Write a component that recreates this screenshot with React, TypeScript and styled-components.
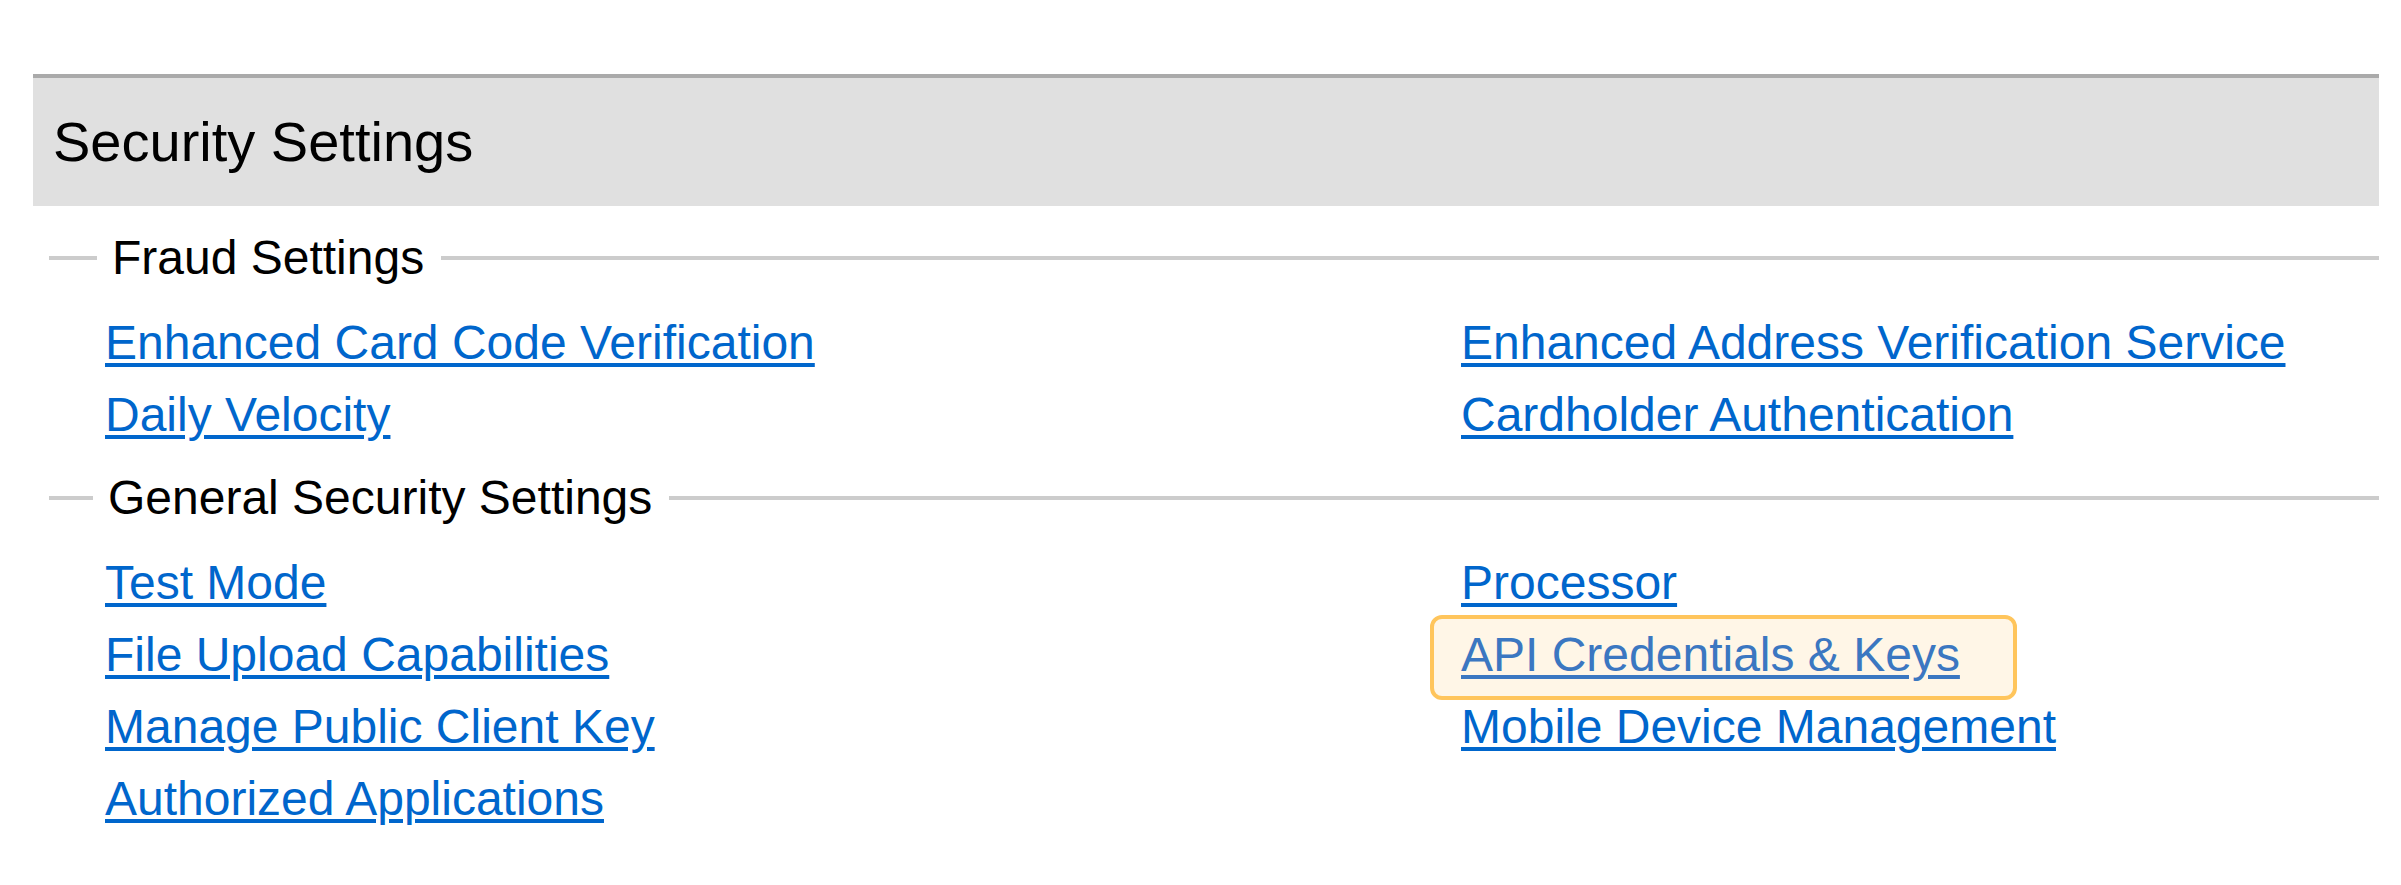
import React from "react";
import styled, { createGlobalStyle } from "styled-components";

const GlobalStyle = createGlobalStyle`
  html, body {
    margin: 0;
    padding: 0;
    background: #ffffff;
  }
  body {
    font-family: "Liberation Sans", Arial, sans-serif;
  }
`;

const Page = styled.div`
  padding: 74px 22px 0 33px;
  font-family: "Liberation Sans", Arial, sans-serif;
`;

const Header = styled.div`
  background: #e0e0e0;
  border-top: 4px solid #aaaaaa;
  padding: 32px 20px;
`;

const Title = styled.h1`
  margin: 0;
  font-size: 56px;
  line-height: 64px;
  font-weight: 400;
  color: #000000;
`;

const Section = styled.section<{ $first?: boolean }>`
  margin-top: ${(p) => (p.$first ? "24px" : "0")};
`;

const Legend = styled.div`
  display: flex;
  align-items: center;
  gap: 15px;
  height: 56px;
  padding-left: 16px;
`;

const Rule = styled.span<{ $width?: number }>`
  display: block;
  height: 4px;
  background: #cccccc;
  ${(p) => (p.$width ? `flex: 0 0 ${p.$width}px;` : "flex: 1 1 auto;")}
`;

const LegendText = styled.span`
  font-size: 48px;
  line-height: 56px;
  color: #000000;
  margin-right: 2px;
`;

const Grid = styled.div`
  display: grid;
  grid-template-columns: 1356px 1fr;
  padding-left: 72px;
  margin: 21px 0 19px;
`;

const Column = styled.ul`
  list-style: none;
  margin: 0;
  padding: 0;
  display: flex;
  flex-direction: column;
`;

const Item = styled.li`
  position: relative;
  height: 72px;
  display: flex;
  align-items: flex-start;
`;

const Highlight = styled.span`
  position: absolute;
  left: -31px;
  top: -4px;
  width: 587px;
  bottom: -9px;
  box-sizing: border-box;
  border: 4px solid #ffc55c;
  background: #fff6e7;
  border-radius: 12px;
  z-index: 0;
`;

const Link = styled.a<{ $highlighted?: boolean }>`
  position: relative;
  z-index: 1;
  font-size: 48px;
  line-height: 72px;
  color: ${(p) => (p.$highlighted ? "#3b77c1" : "#0066cc")};
  text-decoration: underline;
  text-decoration-thickness: 4px;
  text-underline-offset: 4px;
  cursor: pointer;
  white-space: nowrap;
`;

type LinkDef = { label: string; highlighted?: boolean };

const fraudLeft: LinkDef[] = [
  { label: "Enhanced Card Code Verification" },
  { label: "Daily Velocity" },
];
const fraudRight: LinkDef[] = [
  { label: "Enhanced Address Verification Service" },
  { label: "Cardholder Authentication" },
];
const generalLeft: LinkDef[] = [
  { label: "Test Mode" },
  { label: "File Upload Capabilities" },
  { label: "Manage Public Client Key" },
  { label: "Authorized Applications" },
];
const generalRight: LinkDef[] = [
  { label: "Processor" },
  { label: "API Credentials & Keys", highlighted: true },
  { label: "Mobile Device Management" },
];

const LinkList: React.FC<{ links: LinkDef[] }> = ({ links }) => (
  <Column>
    {links.map((l) => (
      <Item key={l.label}>
        {l.highlighted && <Highlight />}
        <Link href="#" $highlighted={l.highlighted} onClick={(e) => e.preventDefault()}>
          {l.label}
        </Link>
      </Item>
    ))}
  </Column>
);

const SettingsGroup: React.FC<{
  title: string;
  left: LinkDef[];
  right: LinkDef[];
  ruleWidth: number;
  first?: boolean;
}> = ({ title, left, right, ruleWidth, first }) => (
  <Section $first={first}>
    <Legend>
      <Rule $width={ruleWidth} />
      <LegendText>{title}</LegendText>
      <Rule />
    </Legend>
    <Grid>
      <LinkList links={left} />
      <LinkList links={right} />
    </Grid>
  </Section>
);

export default function App() {
  return (
    <>
      <GlobalStyle />
      <Page>
        <Header>
          <Title>Security Settings</Title>
        </Header>
        <SettingsGroup
          title="Fraud Settings"
          left={fraudLeft}
          right={fraudRight}
          ruleWidth={48}
          first
        />
        <SettingsGroup
          title="General Security Settings"
          left={generalLeft}
          right={generalRight}
          ruleWidth={44}
        />
      </Page>
    </>
  );
}
